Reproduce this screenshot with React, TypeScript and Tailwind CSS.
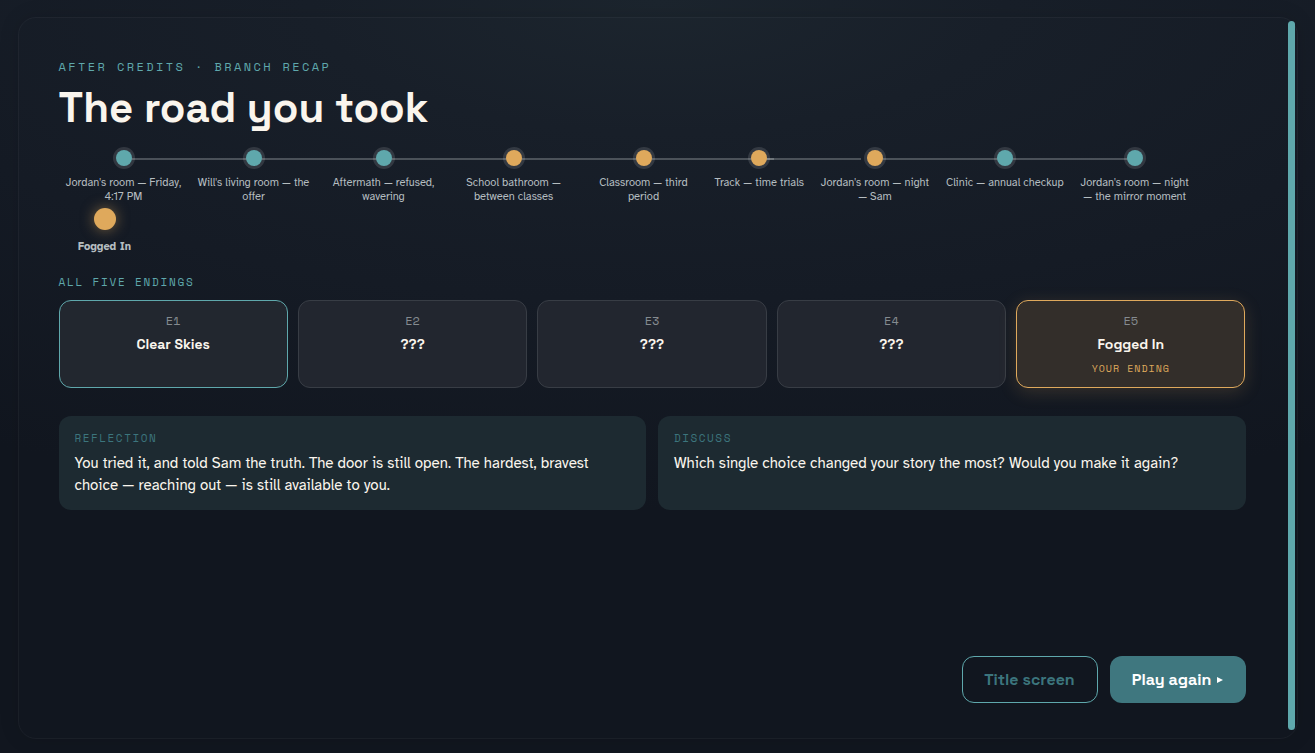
type Tone = "teal" | "amber";

const steps: { label: string; tone: Tone }[] = [
  { label: "Jordan's room — Friday, 4:17 PM", tone: "teal" },
  { label: "Will's living room — the offer", tone: "teal" },
  { label: "Aftermath — refused, wavering", tone: "teal" },
  { label: "School bathroom — between classes", tone: "amber" },
  { label: "Classroom — third period", tone: "amber" },
  { label: "Track — time trials", tone: "amber" },
  { label: "Jordan's room — night — Sam", tone: "amber" },
  { label: "Clinic — annual checkup", tone: "teal" },
  { label: "Jordan's room — night — the mirror moment", tone: "teal" },
];

const endings = [
  { id: "E1", name: "Clear Skies", look: "border-[#5fa8ac] bg-[#22272f]" },
  { id: "E2", name: "???", look: "border-[#383d45] bg-[#22262f]" },
  { id: "E3", name: "???", look: "border-[#383d45] bg-[#22262f]" },
  { id: "E4", name: "???", look: "border-[#383d45] bg-[#22262f]" },
  {
    id: "E5",
    name: "Fogged In",
    look: "border-[#dfa95c] bg-[#332e2a] shadow-[0_4px_18px_rgba(223,169,92,0.18)]",
    note: "Your ending",
  },
];

const notes = [
  {
    title: "Reflection",
    text: "You tried it, and told Sam the truth. The door is still open. The hardest, bravest choice — reaching out — is still available to you.",
  },
  {
    title: "Discuss",
    text: "Which single choice changed your story the most? Would you make it again?",
  },
];

const display = "font-['Space_Grotesk',Inter,sans-serif]";
const mono = "font-['Space_Mono','Liberation_Mono',monospace]";

function Step({ label, tone, last }: { label: string; tone: Tone; last: boolean }) {
  return (
    <li className="relative flex min-w-[92px] max-w-[130px] flex-col items-center px-1.5 pb-1">
      {!last && <span className="absolute left-1/2 top-2 h-0.5 w-full bg-[#b5bdc0]/33" />}
      <span
        className={`relative z-10 size-4 rounded-full shadow-[0_0_0_3px_rgba(255,255,255,0.12)] ${
          tone === "teal" ? "bg-[#5fa8ac]" : "bg-[#dfa95c]"
        }`}
      />
      <span className="mt-2.5 text-center text-[11px] leading-[14px] text-[#b5bdc0]">{label}</span>
    </li>
  );
}

export default function App() {
  return (
    <div className="flex min-h-screen bg-[#11161f] bg-[radial-gradient(ellipse_120%_80%_at_50%_0%,#1c252e_0%,#181f29_22%,#151b25_50%,#11161f_85%)] px-3 pb-[14px] pt-[17px] font-['Atkinson_Hyperlegible','Liberation_Sans',sans-serif] text-[#faf5ed]">
      <main className="mx-auto flex max-w-[1280px] flex-1 rounded-[18px] border border-white/4 pr-[2px] shadow-[0_0_20px_rgba(0,0,0,0.12)]">
        <div className="flex min-w-0 flex-1 flex-col px-10 pb-[35px] pt-10">
          <p className={`${mono} text-xs uppercase leading-[18px] tracking-[0.2em] text-[#5fa8ac]`}>
            After credits · Branch recap
          </p>
          <h1 className={`${display} mt-2 text-[42px] font-bold leading-[48px]`}>The road you took</h1>

          <ol className="mt-[18px] flex flex-wrap">
            {steps.map((s, i) => (
              <Step key={s.label} {...s} last={i === steps.length - 1} />
            ))}
            <li className="flex min-w-[92px] flex-col items-center px-1.5">
              <span className="size-[22px] rounded-full bg-[#dfa95c] shadow-[0_0_14px_rgba(223,169,92,0.5)]" />
              <span className="mt-2.5 text-center text-[11px] font-bold leading-[14px] text-[#b5bdc0]">
                Fogged In
              </span>
            </li>
          </ol>

          <h2 className={`${mono} mt-5 text-[11px] uppercase leading-4 tracking-[0.16em] text-[#5fa8ac]`}>
            All five endings
          </h2>
          <ul className="mt-2.5 grid grid-cols-5 gap-2.5">
            {endings.map((e) => (
              <li
                key={e.id}
                className={`flex min-h-[88px] flex-col items-center rounded-xl border px-3 pt-3 ${e.look}`}
              >
                <span className={`${mono} text-xs leading-4 text-[#858b90]`}>{e.id}</span>
                <span className={`${display} mt-[5px] text-sm font-bold leading-5`}>{e.name}</span>
                {e.note && (
                  <span className={`${mono} mt-2 text-[10px] uppercase leading-[14px] tracking-[0.1em] text-[#dfa95c]`}>
                    {e.note}
                  </span>
                )}
              </li>
            ))}
          </ul>

          <div className="mt-7 grid grid-cols-2 gap-3">
            {notes.map((n) => (
              <section key={n.title} className="min-h-[94px] rounded-xl bg-[#1d2a31] px-4 pt-3.5">
                <h3 className={`${mono} text-[11px] uppercase leading-4 tracking-[0.14em] text-[#3c757d]`}>
                  {n.title}
                </h3>
                <p className="mt-1.5 text-[15px] leading-[22px]">{n.text}</p>
              </section>
            ))}
          </div>

          <div className="mt-auto flex justify-end gap-3">
            <button
              type="button"
              className={`${display} h-[47px] min-w-[136px] rounded-xl border border-[#5fa8ac] px-[21px] text-base font-bold text-[#3c757d]`}
            >
              Title screen
            </button>
            <button
              type="button"
              className={`${display} flex h-[47px] min-w-[136px] items-center justify-center gap-1.5 rounded-xl bg-[#3f777f] px-[21px] text-base font-bold text-white`}
            >
              Play again
              <svg viewBox="0 0 6 6" className="size-1.5" aria-hidden="true">
                <path d="M0 0 6 3 0 6Z" fill="currentColor" />
              </svg>
            </button>
          </div>
        </div>
        <div className="mb-2 ml-0.5 mt-[3px] w-[7px] rounded-full bg-[#5fa8ac]" />
      </main>
    </div>
  );
}
